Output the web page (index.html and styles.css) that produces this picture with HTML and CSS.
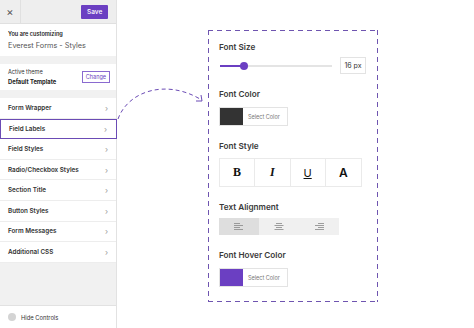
FILE: index.html
```html
<!DOCTYPE html>
<html>
<head>
<meta charset="utf-8">
<link rel="stylesheet" href="styles.css">
</head>
<body>
<div class="page">
  <aside class="sidebar">
    <div class="topbar">
      <div class="close">×</div>
      <div class="save">Save</div>
    </div>
    <div class="info">
      <div class="info-label">You are customizing</div>
      <div class="info-title">Everest Forms - Styles</div>
    </div>
    <div class="theme">
      <div>
        <div class="theme-label">Active theme</div>
        <div class="theme-name">Default Template</div>
      </div>
      <div class="change">Change</div>
    </div>
    <ul class="menu">
      <li>Form Wrapper<span class="chev">›</span></li>
      <li class="active">Field Labels<span class="chev">›</span></li>
      <li>Field Styles<span class="chev">›</span></li>
      <li>Radio/Checkbox Styles<span class="chev">›</span></li>
      <li>Section Title<span class="chev">›</span></li>
      <li>Button Styles<span class="chev">›</span></li>
      <li>Form Messages<span class="chev">›</span></li>
      <li>Additional CSS<span class="chev">›</span></li>
    </ul>
    <div class="filler"></div>
    <div class="footer"><span class="dot"></span>Hide Controls</div>
  </aside>
  <svg class="arrow" width="100" height="50" viewBox="0 0 100 50">
    <path d="M2 46 C 12 18, 50 6, 84 26" fill="none" stroke="#6b4bb5" stroke-width="1" stroke-dasharray="4 3"/>
    <path d="M80 28 L86 28 L85 22" fill="none" stroke="#6b4bb5" stroke-width="1"/>
  </svg>
  <main class="stage">
    <section class="panel">
      <div class="group">
        <div class="label">Font Size</div>
        <div class="size-row">
          <div class="slider"><div class="fill"></div><div class="thumb"></div></div>
          <div class="px">16 px</div>
        </div>
      </div>
      <div class="group">
        <div class="label">Font Color</div>
        <div class="picker"><span class="swatch dark"></span><span class="pick-text">Select Color</span></div>
      </div>
      <div class="group">
        <div class="label">Font Style</div>
        <div class="styles">
          <div class="sbtn b">B</div>
          <div class="sbtn i">I</div>
          <div class="sbtn u">U</div>
          <div class="sbtn a">A</div>
        </div>
      </div>
      <div class="group">
        <div class="label">Text Alignment</div>
        <div class="align">
          <div class="abtn on">
            <svg width="10" height="7" viewBox="0 0 10 7"><path d="M0 0.5H6M0 2.5H9M0 4.5H6M0 6.5H9" stroke="#888" stroke-width="0.8"/></svg>
          </div>
          <div class="abtn">
            <svg width="10" height="7" viewBox="0 0 10 7"><path d="M2 0.5H8M0.5 2.5H9.5M2 4.5H8M0.5 6.5H9.5" stroke="#888" stroke-width="0.8"/></svg>
          </div>
          <div class="abtn">
            <svg width="10" height="7" viewBox="0 0 10 7"><path d="M4 0.5H10M1 2.5H10M4 4.5H10M1 6.5H10" stroke="#888" stroke-width="0.8"/></svg>
          </div>
        </div>
      </div>
      <div class="group">
        <div class="label">Font Hover Color</div>
        <div class="picker"><span class="swatch purple"></span><span class="pick-text">Select Color</span></div>
      </div>
    </section>
  </main>
</div>
</body>
</html>
```

FILE: styles.css
```css
* { box-sizing: border-box; }
html, body { margin: 0; padding: 0; background: #fff; }
body { font-family: "Inter", "Open Sans", sans-serif; color: #333; width: 474px; height: 328px; overflow: hidden; }
.page { display: flex; height: 328px; position: relative; }

.sidebar { width: 117px; height: 328px; display: flex; flex-direction: column; background: #f1f1f1; border-right: 1px solid #e2e2e2; }
.topbar { height: 24px; display: flex; align-items: center; justify-content: space-between; background: #eeeeee; border-bottom: 1px solid #e0e0e0; padding-right: 8px; }
.close { width: 21px; height: 23px; display: flex; align-items: center; justify-content: center; font-size: 11px; color: #555; border-right: 1px solid #e0e0e0; }
.save { background: #6b3fc2; color: #fff; font-size: 6.5px; font-weight: 500; padding: 0 6px; width: 27px; text-align: center; height: 14px; line-height: 14px; border-radius: 1px; }

.info { background: #fff; padding: 7px 8px 6px; margin-bottom: 8px; }
.info-label { font-size: 5.6px; font-weight: 600; color: #222; }
.info-title { font-size: 7.3px; color: #555; margin-top: 4px; }

.theme { background: #fff; padding: 5px 6px 5px 8px; display: flex; align-items: center; justify-content: space-between; margin-bottom: 8px; }
.theme-label { font-size: 5.6px; color: #333; }
.theme-name { font-size: 5.8px; font-weight: 700; color: #222; margin-top: 3px; }
.change { font-size: 5.5px; color: #6b3fc2; border: 1px solid #8a6ad0; padding: 2px 3px; background: #fff; }

.menu { list-style: none; margin: 0; padding: 0; }
.menu li { height: 20.6px; display: flex; align-items: center; justify-content: space-between; background: #fff; border-bottom: 1px solid #ededed; padding: 0 8px; font-size: 6.3px; font-weight: 600; color: #333; }
.menu li.active { border: 1px solid #6b4bb5; margin-right: -1px; padding-right: 9px; }
.chev { color: #999; font-size: 8px; font-weight: 400; }
.filler { flex: 1; background: #f1f1f1; }
.footer { height: 23px; background: #fff; border-top: 1px solid #e2e2e2; display: flex; align-items: center; padding-left: 8px; font-size: 5.8px; color: #333; gap: 5px; }
.dot { width: 8px; height: 8px; border-radius: 50%; background: #d4d4d4; }

.arrow { position: absolute; left: 116px; top: 73px; }

.stage { flex: 1; padding: 30px 0 0 91px; }
.panel {
  width: 170px; height: 272px; padding: 12px 12px 0 11px;
  background:
    repeating-linear-gradient(90deg, #6f55b0 0 5px, transparent 5px 9px) top left / 100% 1px no-repeat,
    repeating-linear-gradient(90deg, #6f55b0 0 5px, transparent 5px 9px) bottom left / 100% 1px no-repeat,
    repeating-linear-gradient(180deg, #6f55b0 0 5px, transparent 5px 9px) top left / 1px 100% no-repeat,
    repeating-linear-gradient(180deg, #6f55b0 0 5px, transparent 5px 9px) top right / 1px 100% no-repeat;
}
.group { margin-bottom: 15px; }
.label { font-size: 8.2px; font-weight: 600; color: #3a3a3a; }

.size-row { display: flex; align-items: center; justify-content: space-between; margin-top: 5px; }
.slider { width: 112px; height: 2px; background: #e4e4e4; position: relative; margin-left: 1px; }
.fill { width: 24px; height: 2px; background: #6b3fc2; }
.thumb { position: absolute; left: 20px; top: -3px; width: 8px; height: 8px; border-radius: 50%; background: #6b3fc2; }
.px { width: 26px; height: 17px; border: 1px solid #e3e3e3; font-size: 7px; display: flex; align-items: center; justify-content: center; color: #333; }

.picker { display: flex; width: 69px; height: 19px; border: 1px solid #e3e3e3; margin-top: 8px; align-items: center; }
.swatch { width: 23px; height: 17px; }
.swatch.dark { background: #333; }
.swatch.purple { background: #6b3fc2; }
.pick-text { font-size: 5.5px; color: #777; padding-left: 5px; }

.styles { display: grid; grid-template-columns: repeat(4, 1fr); width: 143px; height: 29px; border: 1px solid #eaeaea; margin-top: 7px; }
.sbtn { display: flex; align-items: center; justify-content: center; border-right: 1px solid #eaeaea; font-family: "Liberation Serif", serif; font-size: 12px; color: #111; }
.sbtn:last-child { border-right: none; }
.sbtn.b { font-weight: 700; }
.sbtn.i { font-style: italic; font-weight: 700; }
.sbtn.u { text-decoration: underline; font-family: "Inter", sans-serif; font-size: 11px; }
.sbtn.a { font-family: "Inter", sans-serif; font-size: 12px; font-weight: 600; }

.align { display: flex; width: 120px; height: 17px; margin-top: 6px; background: #f0f0f0; }
.abtn { flex: 1; display: flex; align-items: center; justify-content: center; }
.abtn.on { background: #dedede; }
```
